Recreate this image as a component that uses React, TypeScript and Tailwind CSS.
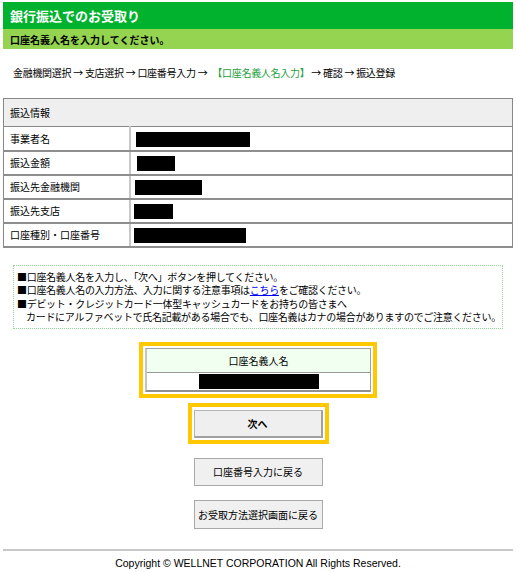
const jp = { fontFamily: '"Noto Sans CJK JP", "Noto Sans", sans-serif' };

function Redact({ w, ml = 0 }: { w: number; ml?: number }) {
  return (
    <span
      className="inline-block h-[15px] bg-black align-middle"
      style={{ width: w, marginLeft: ml }}
    />
  );
}

const rows: { label: string; w: number; ml: number }[] = [
  { label: "事業者名", w: 114, ml: 5 },
  { label: "振込金額", w: 38, ml: 6 },
  { label: "振込先金融機関", w: 67, ml: 4 },
  { label: "振込先支店", w: 39, ml: 3 },
  { label: "口座種別・口座番号", w: 112, ml: 3 },
];

const steps = ["金融機関選択", "支店選択", "口座番号入力"];

export default function App() {
  return (
    <div className="w-[516px] bg-white px-[3px] pt-[2px] text-black" style={jp}>
      <div className="flex h-[27px] items-center bg-[#00b22e] pl-[7px] text-[13px] font-bold text-white">
        銀行振込でのお受取り
      </div>
      <div className="flex h-[20px] items-center bg-[#94d450] pl-[7px] text-[10px] font-bold">
        口座名義人名を入力してください。
      </div>

      <div className="mt-[17px] pl-[10px] text-[10px] leading-[14px] tracking-[-0.3px]">
        {steps.map((s) => (
          <span key={s}>
            {s}
            <span className="px-[2px]">→</span>
          </span>
        ))}
        <span className="pl-[3px] text-[#1e9e3c]">【口座名義人名入力】</span>
        <span className="px-[2px]">→</span>確認<span className="px-[2px]">→</span>振込登録
      </div>

      <table className="mt-[18px] w-full border-collapse border border-[#888] text-[10px]">
        <tbody>
          <tr className="h-[28px] bg-[#efefef]">
            <td colSpan={2} className="border-b border-[#888] pl-[6px]">
              振込情報
            </td>
          </tr>
          {rows.map((r) => (
            <tr key={r.label} className="h-[24px]">
              <td className="w-[126px] border-b-2 border-r-2 border-b-[#8e8e8e] border-r-[#c8c8c8] pl-[6px]">
                {r.label}
              </td>
              <td className="border-b-2 border-b-[#8e8e8e]">
                <Redact w={r.w} ml={r.ml} />
              </td>
            </tr>
          ))}
        </tbody>
      </table>

      <div className="mx-[10px] mt-[17px] border border-dotted border-[#8fd88f] px-[3px] py-[4px] text-[10px] leading-[13.5px] tracking-[-0.3px] whitespace-nowrap">
        <p>■口座名義人名を入力し、「次へ」ボタンを押してください。</p>
        <p>
          ■口座名義人名の入力方法、入力に関する注意事項は
          <span className="text-[#0000ee] underline">こちら</span>をご確認ください。
        </p>
        <p>■デビット・クレジットカード一体型キャッシュカードをお持ちの皆さまへ</p>
        <p className="pl-[9px]">
          カードにアルファベットで氏名記載がある場合でも、口座名義はカナの場合がありますのでご注意ください。
        </p>
      </div>

      <div className="mt-[13px] flex flex-col items-center">
        <div className="w-[238px] border-4 border-[#ffc800] p-[2px]">
          <div className="border border-[#a0a0a0] border-l-2 border-l-[#c4c4c4] border-b-2 border-b-[#909090] text-[10px]">
            <div className="flex h-[24px] items-center justify-center border-b border-[#999] bg-[#f0fff0]">
              口座名義人名
            </div>
            <div className="flex h-[17px] items-center justify-center">
              <Redact w={120} />
            </div>
          </div>
        </div>

        <div className="mt-[5px] w-[141px] border-4 border-[#ffc800] p-[2px]">
          <button className="h-[28px] w-full border border-[#b4b4b4] border-r-2 border-b-2 border-r-[#a0a0a0] border-b-[#a0a0a0] bg-[#efefef] text-[10px] font-bold">
            次へ
          </button>
        </div>

        <button className="mt-[14px] h-[28px] w-[129px] border border-[#a8a8a8] bg-[#f0f0f0] text-[10px]">
          口座番号入力に戻る
        </button>
        <button className="mt-[14px] h-[29px] w-[129px] border border-[#a8a8a8] bg-[#f0f0f0] text-[10px]">
          お受取方法選択画面に戻る
        </button>
      </div>

      <div
        className="mt-[20px] border-t-2 border-[#c8c8c8] pt-[5px] pb-[3px] text-center text-[10.5px]"
        style={{ fontFamily: '"Liberation Sans", Arial, sans-serif' }}
      >
        Copyright © WELLNET CORPORATION All Rights Reserved.
      </div>
    </div>
  );
}
